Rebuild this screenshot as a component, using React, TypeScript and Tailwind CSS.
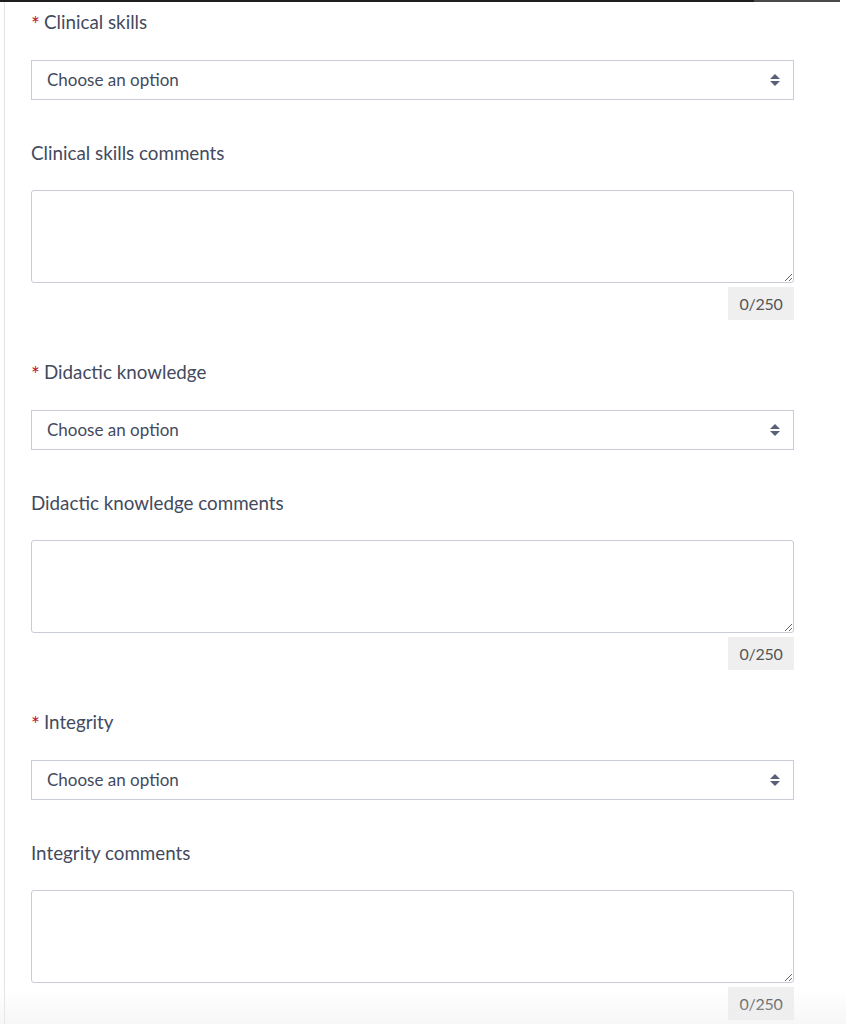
import React from 'react';

const fields = [
  { name: 'Clinical skills' },
  { name: 'Didactic knowledge' },
  { name: 'Integrity' },
];

const SortIcon = () => (
  <svg width="10" height="12" viewBox="0 0 10 12" className="text-[#596078]">
    <path d="M5 0 L10 5 L0 5 Z" fill="currentColor" />
    <path d="M0 7 L10 7 L5 12 Z" fill="currentColor" />
  </svg>
);

const Field: React.FC<{ name: string }> = ({ name }) => {
  return (
    <div className="flex flex-col">
      {/* Rating select */}
      <label className="flex items-center h-6 text-[18.8px] leading-6 text-[#434a5e]">
        <span className="text-[#c0172d] mr-[4px] text-[21px] leading-none mt-[2px]">*</span>
        {name}
      </label>
      <div className="relative mt-[26px] h-10">
        <select
          defaultValue=""
          className="appearance-none w-full h-10 border border-[#c7ccd7] bg-white pl-[15px] pr-10 text-[17px] text-[#434a5e] outline-none"
        >
          <option value="">Choose an option</option>
        </select>
        <div className="absolute right-[14px] top-[14px] pointer-events-none">
          <SortIcon />
        </div>
      </div>

      {/* Comments */}
      <div className="mt-[41px] h-6 text-[18.8px] leading-6 text-[#434a5e]">{name} comments</div>
      <textarea className="mt-[25px] h-[93px] w-full border border-[#c7ccd7] rounded-[3px] bg-white px-3 py-2 text-[16px] outline-none" />
      <div className="flex justify-end mt-[4px]">
        <div className="w-[66px] h-[33px] flex items-center justify-center bg-[#efefef] text-[16px] tracking-[-0.3px] text-[#555555]">
          0/250
        </div>
      </div>
    </div>
  );
};

export default function App() {
  return (
    <div className="relative min-h-screen bg-white overflow-hidden" style={{ fontFamily: 'Lato, "Open Sans", sans-serif' }}>
      <div className="flex h-[2px]">
        <div className="w-[754px] bg-[#1e1e1e]" />
        <div className="w-[86px] bg-[#4a4a4a]" />
        <div className="flex-1 bg-white" />
      </div>
      <div className="ml-[4px] border-l border-[#e4e4e4] min-h-[1022px] pl-[26px] pt-[8px]">
        <div className="w-[763px] flex flex-col gap-[40px]">
          {fields.map((f) => (
            <Field key={f.name} name={f.name} />
          ))}
        </div>
      </div>
      <div className="absolute left-0 right-0 bottom-0 h-[34px] pointer-events-none bg-gradient-to-b from-transparent to-[#eeeeee]/50" />
    </div>
  );
}
